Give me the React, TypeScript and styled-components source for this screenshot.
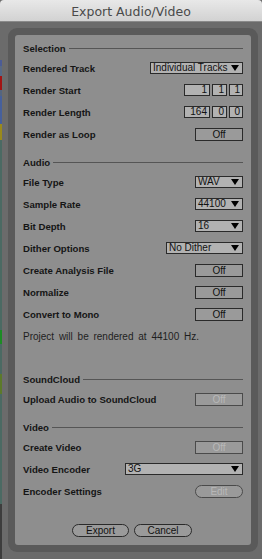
import React from 'react';
import styled, {createGlobalStyle} from "styled-components";

const GlobalStyle = createGlobalStyle`
  html, body {
    margin: 0;
    padding: 0;
    background: #6b6b6b;
  }
  body {
    font-family: "Liberation Sans", Arial, sans-serif;
  }
`

type RowPropsType = {
    label: string
    children?: React.ReactNode
}

const Row = (props: RowPropsType) => {
    return (
        <StyledRow>
            <Label>{props.label}</Label>
            <Controls>{props.children}</Controls>
        </StyledRow>
    );
};

const Select = (props: { value: string, width: number }) => {
    return (
        <StyledSelect style={{width: props.width}}>
            <span>{props.value}</span>
            <Arrow/>
        </StyledSelect>
    );
};

const stripColors = [
    {c: "#4c5c96", h: 6},
    {c: "#586a86", h: 10},
    {c: "#a21414", h: 14},
    {c: "#55657f", h: 6},
    {c: "#46609c", h: 28},
    {c: "#9a8a1c", h: 16},
    {c: "#4b6a63", h: 190},
    {c: "#1c8c24", h: 14},
    {c: "#4b6a63", h: 30},
    {c: "#5c7a2a", h: 20},
    {c: "#4b6a63", h: 110},
    {c: "#3d3d3d", h: 90},
]

export default function App() {
    return (
        <Window>
            <GlobalStyle/>
            <TitleBar>Export Audio/Video</TitleBar>
            <BodyRow>
                <Strip>
                    {stripColors.map((s, i) => (
                        <StripPart key={i} $color={s.c} style={{height: s.h}}/>
                    ))}
                </Strip>
                <FrameArea>
                    <Frame>
                        <Panel>
                            <Section $top={0}>
                                <Header>Selection</Header>
                                <Row label="Rendered Track">
                                    <Select value="Individual Tracks" width={93}/>
                                </Row>
                                <Row label="Render Start">
                                    <NumBox $w={26}>1</NumBox>
                                    <NumBox $w={15}>1</NumBox>
                                    <NumBox $w={14}>1</NumBox>
                                </Row>
                                <Row label="Render Length">
                                    <NumBox $w={26}>164</NumBox>
                                    <NumBox $w={15}>0</NumBox>
                                    <NumBox $w={14}>0</NumBox>
                                </Row>
                                <Row label="Render as Loop">
                                    <Toggle>Off</Toggle>
                                </Row>
                            </Section>

                            <Section $top={10}>
                                <Header>Audio</Header>
                                <Row label="File Type">
                                    <Select value="WAV" width={48}/>
                                </Row>
                                <Row label="Sample Rate">
                                    <Select value="44100" width={48}/>
                                </Row>
                                <Row label="Bit Depth">
                                    <Select value="16" width={48}/>
                                </Row>
                                <Row label="Dither Options">
                                    <Select value="No Dither" width={77}/>
                                </Row>
                                <Row label="Create Analysis File">
                                    <Toggle>Off</Toggle>
                                </Row>
                                <Row label="Normalize">
                                    <Toggle>Off</Toggle>
                                </Row>
                                <Row label="Convert to Mono">
                                    <Toggle>Off</Toggle>
                                </Row>
                                <Note>Project will be rendered at 44100 Hz.</Note>
                            </Section>

                            <Section $top={29}>
                                <Header>SoundCloud</Header>
                                <Row label="Upload Audio to SoundCloud">
                                    <Toggle $disabled>Off</Toggle>
                                </Row>
                            </Section>

                            <Section $top={10}>
                                <Header>Video</Header>
                                <Row label="Create Video">
                                    <Toggle $disabled>Off</Toggle>
                                </Row>
                                <Row label="Video Encoder">
                                    <Select value="3G" width={118}/>
                                </Row>
                                <Row label="Encoder Settings">
                                    <Pill $disabled $w={48}>Edit</Pill>
                                </Row>
                            </Section>

                            <Footer>
                                <Pill $w={57}>Export</Pill>
                                <Pill $w={58}>Cancel</Pill>
                            </Footer>
                        </Panel>
                    </Frame>
                </FrameArea>
            </BodyRow>
        </Window>
    );
}

const Window = styled.div`
  width: 262px;
  height: 559px;
  display: flex;
  flex-direction: column;
  background: #6b6b6b;
  overflow: hidden;
`

const TitleBar = styled.div`
  height: 22px;
  flex-shrink: 0;
  display: flex;
  align-items: center;
  justify-content: center;
  background: linear-gradient(#e8e8e8, #d2d2d2);
  border-bottom: 1px solid #8a8a8a;
  box-sizing: border-box;
  border-radius: 4px 4px 0 0;
  color: #4a4a4a;
  font-family: "DejaVu Sans", sans-serif;
  font-size: 12.5px;
  padding-top: 1px;
`

const BodyRow = styled.div`
  flex: 1;
  min-height: 0;
  display: flex;
`

const Strip = styled.div`
  width: 2px;
  display: flex;
  flex-direction: column;
  padding-top: 38px;
`

const StripPart = styled.div<{ $color: string }>`
  background: ${props => props.$color};
  flex-shrink: 0;
`

const FrameArea = styled.div`
  flex: 1;
  padding: 6px 4px 7px 6px;
  display: flex;
`

const Frame = styled.div`
  flex: 1;
  background: #5a5a5a;
  border-radius: 9px;
  padding: 7px;
  display: flex;
`

const Panel = styled.div`
  flex: 1;
  background: #8e8e8e;
  border-radius: 3px;
  padding: 6px 8px 8px 8px;
  display: flex;
  flex-direction: column;
`

const Section = styled.div<{ $top: number }>`
  display: flex;
  flex-direction: column;
  margin-top: ${props => props.$top}px;
`

const Header = styled.div`
  height: 14px;
  margin-bottom: 2px;
  display: flex;
  align-items: center;
  font-size: 9.6px;
  font-weight: bold;
  color: #151515;

  &::after {
    content: "";
    flex: 1;
    height: 1px;
    margin-left: 3px;
    background: #555;
  }
`

const StyledRow = styled.div`
  height: 22px;
  display: flex;
  align-items: center;
  justify-content: space-between;
`

const Label = styled.div`
  font-size: 9.6px;
  font-weight: bold;
  color: #151515;
  white-space: nowrap;
`

const Controls = styled.div`
  display: flex;
  gap: 2px;
  align-items: center;
`

const StyledSelect = styled.div`
  height: 12px;
  box-sizing: border-box;
  border: 1px solid #2a2a2a;
  background: #b2b2b2;
  display: flex;
  align-items: center;
  justify-content: space-between;
  padding: 0 3px 0 2px;
  font-size: 10px;
  color: #111;
  line-height: 1;
  white-space: nowrap;
`

const Arrow = styled.span`
  width: 0;
  height: 0;
  border-left: 4px solid transparent;
  border-right: 4px solid transparent;
  border-top: 6px solid #000;
`

const NumBox = styled.div<{ $w: number }>`
  width: ${props => props.$w}px;
  height: 12px;
  box-sizing: border-box;
  border: 1px solid #2a2a2a;
  background: #b2b2b2;
  font-size: 10px;
  text-align: right;
  line-height: 10px;
  padding-right: 2px;
  color: #111;
`

const Toggle = styled.div<{ $disabled?: boolean }>`
  width: 48px;
  height: 13px;
  box-sizing: border-box;
  border: 1px solid ${props => props.$disabled ? "#4a4a4a" : "#2a2a2a"};
  background: #9a9a9a;
  font-size: 10px;
  text-align: center;
  line-height: 11px;
  color: ${props => props.$disabled ? "#b8b8b8" : "#111"};
`

const Pill = styled.div<{ $disabled?: boolean, $w: number }>`
  width: ${props => props.$w}px;
  height: 13px;
  box-sizing: border-box;
  border: 1px solid ${props => props.$disabled ? "#4a4a4a" : "#2a2a2a"};
  border-radius: 7px;
  background: #9a9a9a;
  font-size: 10px;
  text-align: center;
  line-height: 11px;
  color: ${props => props.$disabled ? "#b8b8b8" : "#111"};
`

const Note = styled.div`
  margin-top: 6px;
  font-size: 10px;
  color: #1e1e1e;
  word-spacing: 2px;
  line-height: 12px;
`

const Footer = styled.div`
  margin-top: auto;
  display: flex;
  justify-content: center;
  gap: 5px;
  padding-right: 2px;
`
